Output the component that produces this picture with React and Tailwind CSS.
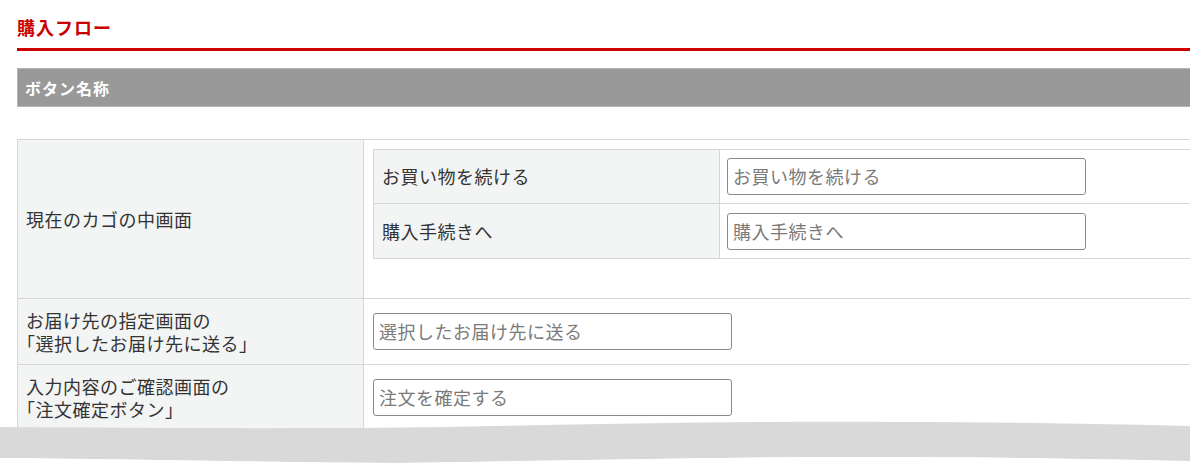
import React from "react";

const font = { fontFamily: '"Noto Sans CJK JP", "Noto Sans", sans-serif' };

function Input({ value }) {
  return (
    <div className="w-[359px] h-[37px] border border-[#8a8a8a] rounded-[3px] bg-white flex items-center pl-[5px] text-[#7a7a7a] text-[18px] tracking-[0.5px] whitespace-nowrap overflow-hidden">
      {value}
    </div>
  );
}

export default function App() {
  return (
    <div className="w-[1190px] h-[465px] overflow-hidden relative bg-white" style={font}>
      <div className="pl-[17px] pt-[14px] w-[1400px]">
        <h2 className="h-[26px] leading-[26px] text-[18px] font-bold text-[#cc0000] tracking-[1px]">
          購入フロー
        </h2>
        <div className="mt-[8px] h-[3px] bg-[#cc0000]" />
        <div className="mt-[17px] h-[39px] bg-[#999999] border border-[#b5b5b5] flex items-center pl-[7px] text-white font-bold text-[16px] tracking-[1px]">
          ボタン名称
        </div>

        <div className="mt-[32px] border border-[#d6d6d6] text-[#333333] text-[18px] tracking-[0.5px] leading-[23px]">
          {/* Row 1 */}
          <div className="flex h-[159px] border-b border-[#d6d6d6]">
            <div className="w-[346px] shrink-0 bg-[#f3f4f4] border-r border-[#d6d6d6] flex items-center pl-[8px]">
              現在のカゴの中画面
            </div>
            <div className="flex-1 pt-[9px] pl-[9px]">
              <div className="border border-[#d6d6d6]">
                <div className="flex h-[54px] border-b border-[#d6d6d6]">
                  <div className="w-[346px] shrink-0 bg-[#f3f4f4] border-r border-[#d6d6d6] flex items-center pl-[8px]">
                    お買い物を続ける
                  </div>
                  <div className="flex-1 flex items-center pl-[7px]">
                    <Input value="お買い物を続ける" />
                  </div>
                </div>
                <div className="flex h-[54px]">
                  <div className="w-[346px] shrink-0 bg-[#f3f4f4] border-r border-[#d6d6d6] flex items-center pl-[8px]">
                    購入手続きへ
                  </div>
                  <div className="flex-1 flex items-center pl-[7px]">
                    <Input value="購入手続きへ" />
                  </div>
                </div>
              </div>
            </div>
          </div>
          {/* Row 2 */}
          <div className="flex h-[66px] border-b border-[#d6d6d6]">
            <div className="w-[346px] shrink-0 bg-[#f3f4f4] border-r border-[#d6d6d6] flex flex-col justify-center pl-[8px]">
              <span className="block">お届け先の指定画面の</span>
              <span className="block -ml-[9px]">「選択したお届け先に送る」</span>
            </div>
            <div className="flex-1 flex items-center pl-[9px]">
              <Input value="選択したお届け先に送る" />
            </div>
          </div>
          {/* Row 3 */}
          <div className="flex h-[66px] border-b border-[#d6d6d6]">
            <div className="w-[346px] shrink-0 bg-[#f3f4f4] border-r border-[#d6d6d6] flex flex-col justify-center pl-[8px]">
              <span className="block">入力内容のご確認画面の</span>
              <span className="block -ml-[9px]">「注文確定ボタン」</span>
            </div>
            <div className="flex-1 flex items-center pl-[9px]">
              <Input value="注文を確定する" />
            </div>
          </div>
        </div>
      </div>

      {/* torn screenshot edge */}
      <svg
        className="absolute left-0 top-[415px]"
        width="1190"
        height="50"
        viewBox="0 415 1190 50"
      >
        <path
          d="M0,427 C150,428 300,429 450,427 C600,424 750,421 900,422 C1000,422 1100,424 1190,426 L1190,461 C1100,459 1000,457 850,457 C700,457 550,461 400,463 C250,462 120,459 0,458 Z"
          fill="#d9d9d9"
        />
        <path
          d="M0,458 C120,459 250,462 400,463 C550,461 700,457 850,457 C1000,457 1100,459 1190,461 L1190,465 L0,465 Z"
          fill="#ffffff"
        />
      </svg>
    </div>
  );
}
